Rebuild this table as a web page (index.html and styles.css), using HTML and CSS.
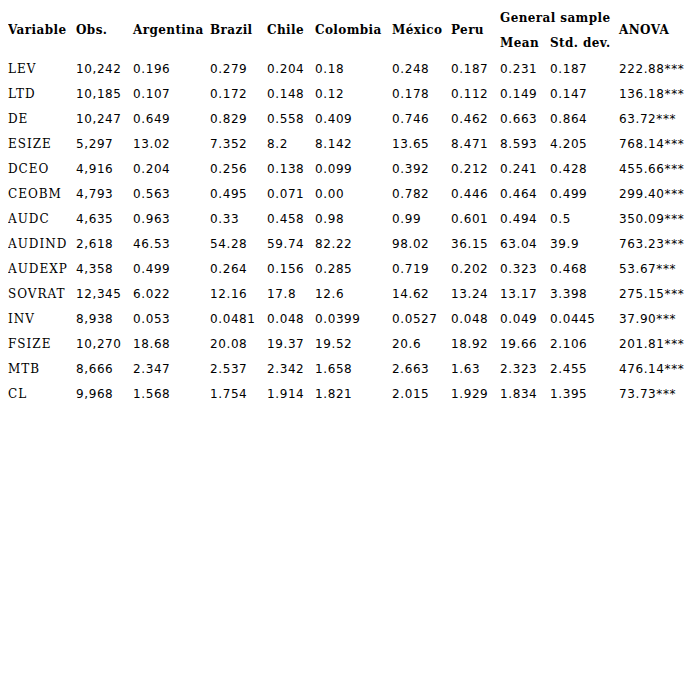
FILE: index.html
```html
<!DOCTYPE html>
<html>
<head>
<meta charset="utf-8">
<link rel="stylesheet" href="styles.css">
</head>
<body>
<table class="stats">
<colgroup>
<col class="c-var"><col class="c-obs"><col class="c-arg"><col class="c-bra"><col class="c-chi"><col class="c-col"><col class="c-mex"><col class="c-per"><col class="c-mean"><col class="c-sd"><col class="c-anova">
</colgroup>
<thead>
<tr>
<th rowspan="2">Variable</th><th rowspan="2">Obs.</th><th rowspan="2">Argentina</th><th rowspan="2">Brazil</th><th rowspan="2">Chile</th><th rowspan="2">Colombia</th><th rowspan="2">México</th><th rowspan="2">Peru</th><th colspan="2">General sample</th><th rowspan="2">ANOVA</th>
</tr>
<tr><th>Mean</th><th>Std. dev.</th></tr>
</thead>
<tbody>
<tr><td class="name">LEV</td><td>10,242</td><td>0.196</td><td>0.279</td><td>0.204</td><td>0.18</td><td>0.248</td><td>0.187</td><td>0.231</td><td>0.187</td><td>222.88***</td></tr>
<tr><td class="name">LTD</td><td>10,185</td><td>0.107</td><td>0.172</td><td>0.148</td><td>0.12</td><td>0.178</td><td>0.112</td><td>0.149</td><td>0.147</td><td>136.18***</td></tr>
<tr><td class="name">DE</td><td>10,247</td><td>0.649</td><td>0.829</td><td>0.558</td><td>0.409</td><td>0.746</td><td>0.462</td><td>0.663</td><td>0.864</td><td>63.72***</td></tr>
<tr><td class="name">ESIZE</td><td>5,297</td><td>13.02</td><td>7.352</td><td>8.2</td><td>8.142</td><td>13.65</td><td>8.471</td><td>8.593</td><td>4.205</td><td>768.14***</td></tr>
<tr><td class="name">DCEO</td><td>4,916</td><td>0.204</td><td>0.256</td><td>0.138</td><td>0.099</td><td>0.392</td><td>0.212</td><td>0.241</td><td>0.428</td><td>455.66***</td></tr>
<tr><td class="name">CEOBM</td><td>4,793</td><td>0.563</td><td>0.495</td><td>0.071</td><td>0.00</td><td>0.782</td><td>0.446</td><td>0.464</td><td>0.499</td><td>299.40***</td></tr>
<tr><td class="name">AUDC</td><td>4,635</td><td>0.963</td><td>0.33</td><td>0.458</td><td>0.98</td><td>0.99</td><td>0.601</td><td>0.494</td><td>0.5</td><td>350.09***</td></tr>
<tr><td class="name">AUDIND</td><td>2,618</td><td>46.53</td><td>54.28</td><td>59.74</td><td>82.22</td><td>98.02</td><td>36.15</td><td>63.04</td><td>39.9</td><td>763.23***</td></tr>
<tr><td class="name">AUDEXP</td><td>4,358</td><td>0.499</td><td>0.264</td><td>0.156</td><td>0.285</td><td>0.719</td><td>0.202</td><td>0.323</td><td>0.468</td><td>53.67***</td></tr>
<tr><td class="name">SOVRAT</td><td>12,345</td><td>6.022</td><td>12.16</td><td>17.8</td><td>12.6</td><td>14.62</td><td>13.24</td><td>13.17</td><td>3.398</td><td>275.15***</td></tr>
<tr><td class="name">INV</td><td>8,938</td><td>0.053</td><td>0.0481</td><td>0.048</td><td>0.0399</td><td>0.0527</td><td>0.048</td><td>0.049</td><td>0.0445</td><td>37.90***</td></tr>
<tr><td class="name">FSIZE</td><td>10,270</td><td>18.68</td><td>20.08</td><td>19.37</td><td>19.52</td><td>20.6</td><td>18.92</td><td>19.66</td><td>2.106</td><td>201.81***</td></tr>
<tr><td class="name">MTB</td><td>8,666</td><td>2.347</td><td>2.537</td><td>2.342</td><td>1.658</td><td>2.663</td><td>1.63</td><td>2.323</td><td>2.455</td><td>476.14***</td></tr>
<tr><td class="name">CL</td><td>9,968</td><td>1.568</td><td>1.754</td><td>1.914</td><td>1.821</td><td>2.015</td><td>1.929</td><td>1.834</td><td>1.395</td><td>73.73***</td></tr>
</tbody>
</table>
</body>
</html>
```

FILE: styles.css
```css
html, body {
  background: #ffffff;
}
body {
  margin: 5px 0 0 8px;
  color: #000000;
}
.stats {
  border-collapse: collapse;
  table-layout: fixed;
  width: 689px;
}
.c-var { width: 68px; }
.c-obs { width: 57px; }
.c-arg { width: 77px; }
.c-bra { width: 57px; }
.c-chi { width: 48px; }
.c-col { width: 77px; }
.c-mex { width: 59px; }
.c-per { width: 49px; }
.c-mean { width: 50px; }
.c-sd { width: 69px; }
.c-anova { width: 78px; }
.stats th, .stats td {
  padding: 0;
  text-align: left;
  vertical-align: middle;
  white-space: nowrap;
  line-height: 16px;
}
.stats th {
  height: 25px;
  font-family: "DejaVu Serif", serif;
  font-weight: bold;
  font-size: 12px;
  letter-spacing: 0.4px;
}
.stats td {
  box-sizing: border-box;
  height: 25px;
  padding-top: 2px;
  font-family: "DejaVu Sans", sans-serif;
  font-weight: normal;
  font-size: 12px;
  letter-spacing: 0.6px;
}
.stats td.name {
  font-family: "DejaVu Serif", serif;
  font-size: 12px;
  letter-spacing: 1px;
}
```
